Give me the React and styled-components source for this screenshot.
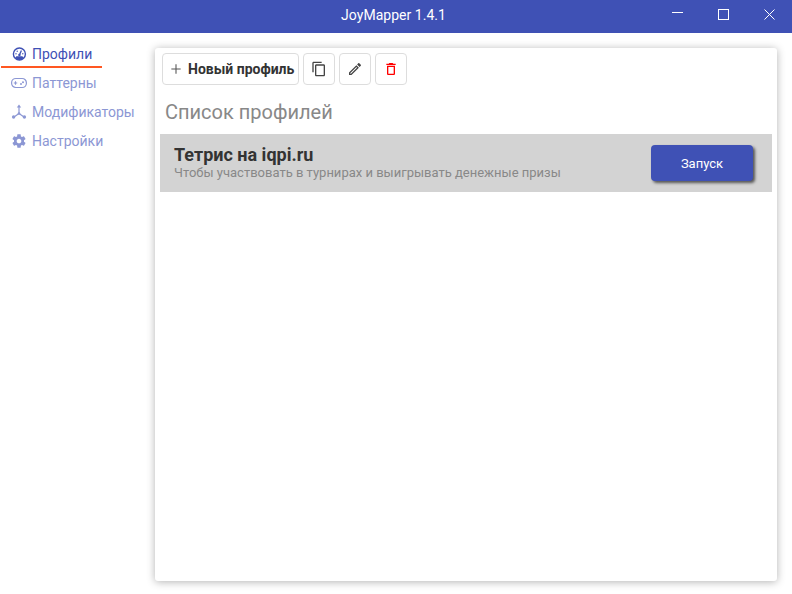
import React from "react";
import styled, { createGlobalStyle } from "styled-components";

const GlobalStyle = createGlobalStyle`
  html, body {
    margin: 0;
    padding: 0;
    background: #fff;
    font-family: Roboto, "Liberation Sans", sans-serif;
  }
`;

const Page = styled.div`
  width: 792px;
  height: 594px;
  display: flex;
  flex-direction: column;
  overflow: hidden;
`;

const TitleBar = styled.header`
  height: 33px;
  flex: none;
  background: #3f51b5;
  position: relative;
  display: flex;
  justify-content: center;
  color: #fff;
`;

const AppName = styled.div`
  font-size: 14px;
  line-height: 30px;
  letter-spacing: 0.03px;
  margin-right: 5px;
`;

const WindowControls = styled.div`
  position: absolute;
  top: 0;
  right: 0;
  display: flex;
`;

const WindowButton = styled.div`
  width: 46px;
  height: 28px;
  display: flex;
  align-items: center;
  justify-content: center;
`;

const Body = styled.div`
  flex: 1;
  display: flex;
  min-height: 0;
`;

const Sidebar = styled.nav`
  width: 155px;
  flex: none;
  padding-top: 6px;
  box-sizing: border-box;
`;

const NavItem = styled.div`
  width: 101px;
  height: 29px;
  margin-left: 1px;
  box-sizing: border-box;
  display: flex;
  align-items: center;
  white-space: nowrap;
  font-size: 14px;
  color: ${(p) => (p.$active ? "#3f51b5" : "#8c97d4")};
  position: relative;

  svg {
    width: 16px;
    height: 16px;
    margin-left: 10px;
    margin-right: 5px;
    flex: none;
  }
`;

const ActiveLine = styled.div`
  position: absolute;
  left: 0;
  right: 0;
  bottom: 0;
  height: 2px;
  background: #ff5722;
`;

const Card = styled.main`
  width: 622px;
  height: 533px;
  margin-top: 15px;
  background: #fff;
  border-radius: 3px;
  box-shadow: 0 1px 8px rgba(0, 0, 0, 0.3);
  padding: 5px;
  box-sizing: border-box;
`;

const Toolbar = styled.div`
  display: flex;
  gap: 4px;
  padding-left: 2px;
`;

const ToolButton = styled.button`
  height: 32px;
  width: ${(p) => (p.$wide ? "137px" : "32px")};
  padding: ${(p) => (p.$wide ? "0 0 0 5px" : "0")};
  background: #fff;
  border: 1px solid #ddd;
  border-radius: 4px;
  box-sizing: border-box;
  display: flex;
  align-items: center;
  justify-content: ${(p) => (p.$wide ? "flex-start" : "center")};
  gap: 4px;
  font-family: inherit;
  font-size: 14px;
  font-weight: 700;
  color: #333;
  white-space: nowrap;

  svg {
    width: 16px;
    height: 16px;
    flex: none;
  }
`;

const Heading = styled.h2`
  margin: 0;
  padding: 15px 0 0 5px;
  font-size: 20px;
  font-weight: 400;
  line-height: 24px;
  height: 49px;
  box-sizing: border-box;
  color: #888;
`;

const ProfileRow = styled.div`
  height: 58px;
  width: 612px;
  background: #d3d3d3;
  display: flex;
  align-items: center;
  justify-content: space-between;
  padding: 0 18px 0 14px;
  box-sizing: border-box;
`;

const ProfileName = styled.div`
  font-size: 18px;
  font-weight: 700;
  line-height: 20px;
  color: #333;
  margin-top: -1px;
`;

const ProfileNote = styled.div`
  font-size: 13px;
  line-height: 14px;
  color: #888;
  margin-top: 1px;
`;

const RunButton = styled.button`
  width: 102px;
  height: 36px;
  margin-right: 1px;
  background: #3f51b5;
  border: 0;
  border-radius: 4px;
  box-shadow: 2px 2px 3px rgba(0, 0, 0, 0.6);
  color: #fff;
  font-family: inherit;
  font-size: 13px;
`;

const GaugeIcon = () => (
  <svg viewBox="0 0 16 16">
    <circle cx="8.4" cy="8" r="6" fill="none" stroke="currentColor" strokeWidth="1.4" />
    <path d="M4 12a6 6 0 0 0 8.8 0l-1.4-1.7h-6z" fill="currentColor" />
    <path d="M8.4 9l2-4.4" stroke="currentColor" strokeWidth="1.3" />
    <circle cx="8.4" cy="9" r="1.2" fill="currentColor" />
    <circle cx="5" cy="7.8" r=".7" fill="currentColor" />
    <circle cx="6.2" cy="5.2" r=".7" fill="currentColor" />
    <circle cx="11.8" cy="7.8" r=".7" fill="currentColor" />
  </svg>
);

const GamepadIcon = () => (
  <svg viewBox="0 0 16 16">
    <rect x="0.6" y="3.5" width="14.8" height="9" rx="4.2" fill="none" stroke="currentColor" strokeWidth="1.2" />
    <path d="M2.8 8h3.4M4.5 6.3v3.4" stroke="currentColor" strokeWidth="1.1" />
    <circle cx="10" cy="9" r="1" fill="currentColor" />
    <circle cx="12" cy="7.2" r="1" fill="currentColor" />
  </svg>
);

const AxisIcon = () => (
  <svg viewBox="0 0 16 16">
    <path d="M8 3v6.5M8 9.5 3 13M8 9.5l5 3.5" stroke="currentColor" strokeWidth="1.2" fill="none" />
    <path d="M8 .6 10.2 3.6H5.8z" fill="currentColor" />
    <circle cx="2.6" cy="13" r="1.7" fill="currentColor" />
    <circle cx="13.4" cy="13" r="1.7" fill="currentColor" />
    <circle cx="8" cy="9.5" r="1.3" fill="currentColor" />
  </svg>
);

const GearIcon = () => (
  <svg viewBox="0 0 24 24">
    <path
      fill="currentColor"
      d="M19.43 12.98c.04-.32.07-.64.07-.98s-.03-.66-.07-.98l2.11-1.65c.19-.15.24-.42.12-.64l-2-3.46c-.12-.22-.39-.3-.61-.22l-2.49 1c-.52-.4-1.08-.73-1.69-.98l-.38-2.65C14.46 2.18 14.25 2 14 2h-4c-.25 0-.46.18-.49.42l-.38 2.65c-.61.25-1.17.59-1.69.98l-2.49-1c-.23-.09-.49 0-.61.22l-2 3.46c-.13.22-.07.49.12.64l2.11 1.65c-.04.32-.07.65-.07.98s.03.66.07.98l-2.11 1.65c-.19.15-.24.42-.12.64l2 3.46c.12.22.39.3.61.22l2.49-1c.52.4 1.08.73 1.69.98l.38 2.65c.03.24.24.42.49.42h4c.25 0 .46-.18.49-.42l.38-2.65c.61-.25 1.17-.59 1.69-.98l2.49 1c.23.09.49 0 .61-.22l2-3.46c.12-.22.07-.49-.12-.64l-2.11-1.65zM12 15.5c-1.93 0-3.5-1.57-3.5-3.5s1.57-3.5 3.5-3.5 3.5 1.57 3.5 3.5-1.57 3.5-3.5 3.5z"
    />
  </svg>
);

const PlusIcon = () => (
  <svg viewBox="0 0 24 24">
    <path fill="#555" d="M19 12.8h-6.2V19h-1.6v-6.2H5v-1.6h6.2V5h1.6v6.2H19v1.6z" />
  </svg>
);

const CopyIcon = () => (
  <svg viewBox="0 0 24 24">
    <path
      fill="#444"
      d="M16 1H4c-1.1 0-2 .9-2 2v14h2V3h12V1zm3 4H8c-1.1 0-2 .9-2 2v14c0 1.1.9 2 2 2h11c1.1 0 2-.9 2-2V7c0-1.1-.9-2-2-2zm0 16H8V7h11v14z"
    />
  </svg>
);

const EditIcon = () => (
  <svg viewBox="0 0 24 24">
    <path
      fill="#444"
      d="M3 17.25V21h3.75L17.81 9.94l-3.75-3.75L3 17.25zM5.92 19H5v-.92l9.06-9.06.92.92L5.92 19zM20.71 7.04c.39-.39.39-1.02 0-1.41l-2.34-2.34c-.39-.39-1.02-.39-1.41 0l-1.83 1.83 3.75 3.75 1.83-1.83z"
    />
  </svg>
);

const TrashIcon = () => (
  <svg viewBox="0 0 24 24">
    <path fill="#f00" d="M6 19c0 1.1.9 2 2 2h8c1.1 0 2-.9 2-2V7H6v12zM8 9h8v10H8V9zm7.5-5l-1-1h-5l-1 1H5v2h14V4z" />
  </svg>
);

const navItems = [
  { label: "Профили", icon: <GaugeIcon />, active: true },
  { label: "Паттерны", icon: <GamepadIcon /> },
  { label: "Модификаторы", icon: <AxisIcon /> },
  { label: "Настройки", icon: <GearIcon /> },
];

export default function App() {
  return (
    <Page>
      <GlobalStyle />
      <TitleBar>
        <AppName>JoyMapper 1.4.1</AppName>
        <WindowControls>
          <WindowButton>
            <svg width="11" height="11" viewBox="0 0 11 11">
              <path d="M0 3.5h11" stroke="#fff" />
            </svg>
          </WindowButton>
          <WindowButton>
            <svg width="11" height="11" viewBox="0 0 11 11">
              <rect x=".5" y=".5" width="10" height="10" fill="none" stroke="#fff" />
            </svg>
          </WindowButton>
          <WindowButton>
            <svg width="11" height="11" viewBox="0 0 11 11">
              <path d="M.5.5l10 10M10.5.5l-10 10" stroke="#fff" />
            </svg>
          </WindowButton>
        </WindowControls>
      </TitleBar>
      <Body>
        <Sidebar>
          {navItems.map((item) => (
            <NavItem key={item.label} $active={item.active}>
              {item.icon}
              {item.label}
              {item.active && <ActiveLine />}
            </NavItem>
          ))}
        </Sidebar>
        <Card>
          <Toolbar>
            <ToolButton $wide>
              <PlusIcon />
              Новый профиль
            </ToolButton>
            <ToolButton>
              <CopyIcon />
            </ToolButton>
            <ToolButton>
              <EditIcon />
            </ToolButton>
            <ToolButton>
              <TrashIcon />
            </ToolButton>
          </Toolbar>
          <Heading>Список профилей</Heading>
          <ProfileRow>
            <div>
              <ProfileName>Тетрис на iqpi.ru</ProfileName>
              <ProfileNote>Чтобы участвовать в турнирах и выигрывать денежные призы</ProfileNote>
            </div>
            <RunButton>Запуск</RunButton>
          </ProfileRow>
        </Card>
      </Body>
    </Page>
  );
}
